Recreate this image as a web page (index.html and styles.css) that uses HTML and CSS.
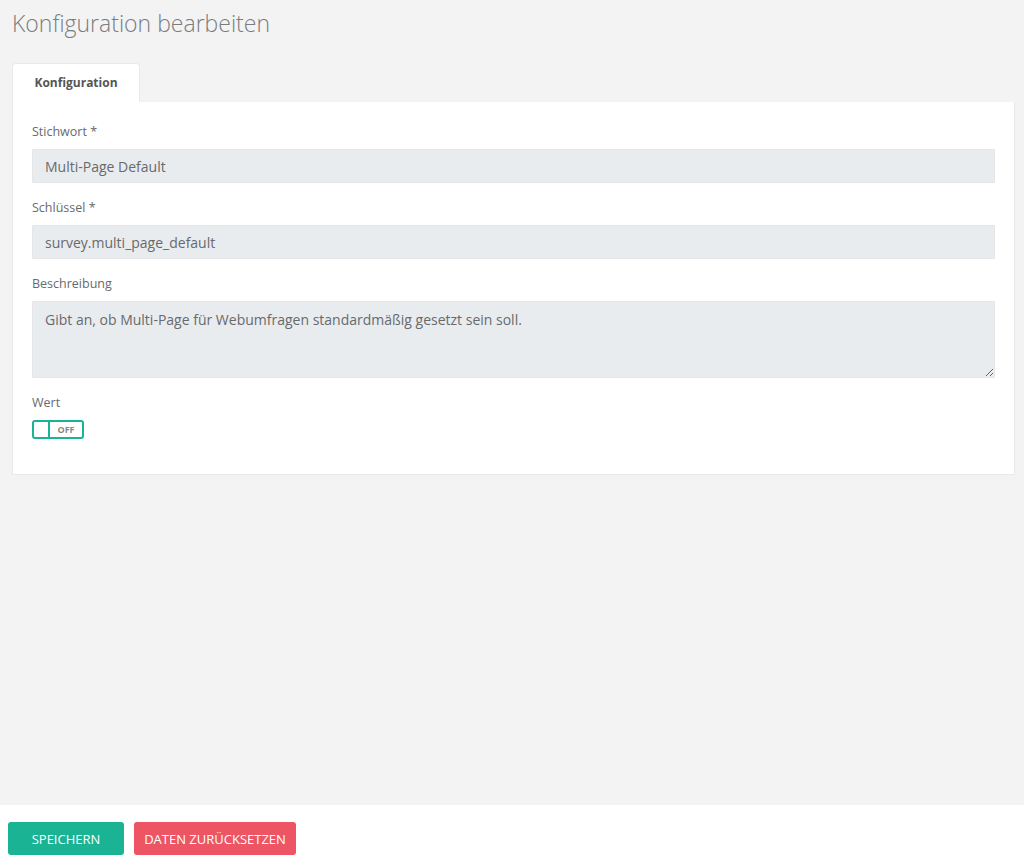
FILE: index.html
```html
<!DOCTYPE html>
<html lang="de">
<head>
    <meta charset="UTF-8">
    <title>Konfiguration bearbeiten</title>
    <link rel="stylesheet" href="styles.css">
</head>
<body>
    <div class="page">
        <div class="content">
            <h1 class="page-title">Konfiguration bearbeiten</h1>

            <div class="tabs">
                <div class="tab active">Konfiguration</div>
            </div>

            <div class="panel">
                <div class="form-group">
                    <label>Stichwort *</label>
                    <input class="form-control" type="text" value="Multi-Page Default" readonly>
                </div>
                <div class="form-group">
                    <label>Schlüssel *</label>
                    <input class="form-control" type="text" value="survey.multi_page_default" readonly>
                </div>
                <div class="form-group">
                    <label>Beschreibung</label>
                    <textarea class="form-control textarea" readonly>Gibt an, ob Multi-Page für Webumfragen standardmäßig gesetzt sein soll.</textarea>
                </div>
                <div class="form-group">
                    <label>Wert</label>
                    <div class="switch">
                        <span class="switch-knob"></span>
                        <span class="switch-label">OFF</span>
                    </div>
                </div>
            </div>
        </div>

        <div class="footer">
            <button class="btn btn-primary">Speichern</button>
            <button class="btn btn-danger">Daten zurücksetzen</button>
        </div>
    </div>
</body>
</html>
```

FILE: styles.css
```css
body, html {
    margin: 0;
    padding: 0;
    height: 100%;
    background-color: #f3f3f4;
    font-family: 'Open Sans', 'Liberation Sans', Arial, sans-serif;
    color: #676a6c;
}

.page {
    min-height: 100%;
    display: flex;
    flex-direction: column;
}

.content {
    flex: 1;
    padding: 9px 9px 0 12px;
}

.page-title {
    margin: 0;
    font-size: 23px;
    font-weight: 300;
    line-height: 29px;
    color: #7a7c7e;
}

.tabs {
    display: flex;
    margin-top: 25px;
}

.tab {
    width: 126px;
    height: 38px;
    line-height: 38px;
    text-align: center;
    font-size: 12px;
    font-weight: 700;
    color: #555;
    background-color: #ffffff;
    border: 1px solid #e7eaec;
    border-bottom: none;
    border-radius: 4px 4px 0 0;
}

.panel {
    background-color: #ffffff;
    border: 1px solid #e7eaec;
    border-top: none;
    padding: 20px 19px 20px 19px;
}

.form-group {
    display: flex;
    flex-direction: column;
    margin-bottom: 15px;
}

.form-group label {
    font-size: 12.5px;
    line-height: 19px;
    margin-bottom: 8px;
    color: #676a6c;
}

.form-control {
    box-sizing: border-box;
    width: 100%;
    height: 34px;
    padding: 6px 12px;
    border: 1px solid #e5e6e7;
    border-radius: 1px;
    background-color: #e9ecef;
    font-family: inherit;
    font-size: 14px;
    color: #676a6c;
    outline: none;
}

.textarea {
    height: 77px;
    padding: 8px 12px;
    line-height: 20px;
    resize: vertical;
}

.switch {
    box-sizing: border-box;
    display: flex;
    align-items: stretch;
    width: 52px;
    height: 19px;
    border: 2px solid #1ab394;
    border-radius: 3px;
}

.switch-knob {
    width: 14px;
    border-right: 2px solid #1ab394;
}

.switch-label {
    flex: 1;
    text-align: center;
    font-size: 9px;
    font-weight: 700;
    line-height: 15px;
    color: #888;
}

.footer {
    background-color: #ffffff;
    height: 63px;
    padding: 17px 8px 0 8px;
    box-sizing: border-box;
    display: flex;
    gap: 10px;
    align-items: flex-start;
}

.btn {
    height: 33px;
    padding: 0;
    border: none;
    border-radius: 3px;
    font-family: inherit;
    font-size: 13px;
    text-transform: uppercase;
    white-space: nowrap;
    color: #ffffff;
    cursor: pointer;
}

.btn-primary {
    width: 116px;
    background-color: #1ab394;
}

.btn-danger {
    width: 162px;
    background-color: #ed5565;
}
```
